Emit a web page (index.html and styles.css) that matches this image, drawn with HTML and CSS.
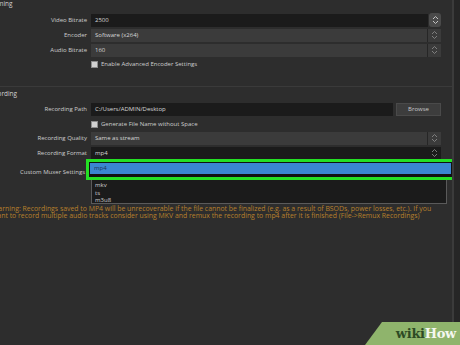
FILE: index.html
```html
<!DOCTYPE html>
<html lang="en">
<head>
    <meta charset="UTF-8">
    <title>Output Settings</title>
    <link rel="stylesheet" href="styles.css">
</head>
<body>
    <div class="panel">
        <section class="group streaming">
            <div class="group-title">Streaming</div>
            <div class="row first">
                <label>Video Bitrate</label>
                <div class="field">
                    <div class="input dark">2500</div>
                    <div class="spin">
                        <svg width="7" height="10" viewBox="0 0 7 10"><path d="M1 4 L3.5 1.5 L6 4 M1 6 L3.5 8.5 L6 6" fill="none" stroke="#c4c4c4" stroke-width="1"/></svg>
                    </div>
                </div>
            </div>
            <div class="row">
                <label>Encoder</label>
                <div class="field combo">
                    <div class="input gray">Software (x264)</div>
                    <div class="arrows">
                        <svg width="7" height="10" viewBox="0 0 7 10"><path d="M1 4 L3.5 1.5 L6 4 M1 6 L3.5 8.5 L6 6" fill="none" stroke="#8f8f8f" stroke-width="0.8"/></svg>
                    </div>
                </div>
            </div>
            <div class="row">
                <label>Audio Bitrate</label>
                <div class="field combo">
                    <div class="input gray">160</div>
                    <div class="arrows">
                        <svg width="7" height="10" viewBox="0 0 7 10"><path d="M1 4 L3.5 1.5 L6 4 M1 6 L3.5 8.5 L6 6" fill="none" stroke="#8f8f8f" stroke-width="0.8"/></svg>
                    </div>
                </div>
            </div>
            <div class="row check-row">
                <span></span>
                <div class="check"><i class="box"></i>Enable Advanced Encoder Settings</div>
            </div>
        </section>

        <section class="group recording">
            <div class="group-title">Recording</div>
            <div class="row">
                <label>Recording Path</label>
                <div class="field">
                    <div class="input dark path">C:/Users/ADMIN/Desktop</div>
                    <button class="browse">Browse</button>
                </div>
            </div>
            <div class="row check-row">
                <span></span>
                <div class="check"><i class="box"></i>Generate File Name without Space</div>
            </div>
            <div class="row">
                <label>Recording Quality</label>
                <div class="field combo">
                    <div class="input gray">Same as stream</div>
                    <div class="arrows">
                        <svg width="7" height="10" viewBox="0 0 7 10"><path d="M1 4 L3.5 1.5 L6 4 M1 6 L3.5 8.5 L6 6" fill="none" stroke="#8f8f8f" stroke-width="0.8"/></svg>
                    </div>
                </div>
            </div>
            <div class="row">
                <label>Recording Format</label>
                <div class="field combo open">
                    <div class="input dark">mp4</div>
                    <div class="arrows">
                        <svg width="7" height="10" viewBox="0 0 7 10"><path d="M1 4 L3.5 1.5 L6 4 M1 6 L3.5 8.5 L6 6" fill="none" stroke="#8f8f8f" stroke-width="0.8"/></svg>
                    </div>
                </div>
            </div>
            <div class="row muxer-row">
                <label>Custom Muxer Settings</label>
                <div class="dropdown">
                    <div class="highlight"><div class="item selected">mp4</div></div>
                    <div class="item">mov</div>
                    <div class="item">mkv</div>
                    <div class="item">ts</div>
                    <div class="item">m3u8</div>
                </div>
            </div>
        </section>

        <p class="warning">Warning: Recordings saved to MP4 will be unrecoverable if the file cannot be finalized (e.g. as a result of BSODs, power losses, etc.). If you<br>want to record multiple audio tracks consider using MKV and remux the recording to mp4 after it is finished (File-&gt;Remux Recordings)</p>
    </div>

    <div class="wikihow"><span class="wiki">wiki</span><span class="how">How</span></div>
</body>
</html>
```

FILE: styles.css
```css
body {
    margin: 0;
    width: 460px;
    height: 345px;
    overflow: hidden;
    background-color: #262626;
    font-family: "Open Sans", "Noto Sans", sans-serif;
    font-size: 6px;
    color: #cfcfcf;
    position: relative;
}

.panel {
    width: 452px;
    height: 345px;
    background-color: #2d2d2d;
    border-right: 2px solid #3b3b3b;
    overflow: hidden;
}

.group-title {
    height: 8px;
    line-height: 7px;
    color: #d4d4d4;
    font-size: 6.4px;
}

.streaming {
    height: 86px;
    border-bottom: 1px solid #3a3a3a;
}

.streaming .group-title {
    margin-left: -18px;
}

.recording {
    padding-top: 3px;
}

.recording .group-title {
    margin-left: -13px;
    margin-bottom: 4px;
}

.row {
    display: grid;
    grid-template-columns: 87px 1fr;
    column-gap: 4px;
    align-items: center;
    height: 14px;
    margin-bottom: 1px;
    padding-right: 11px;
}

.row.first {
    margin-top: 5px;
}

label {
    text-align: right;
    white-space: nowrap;
    color: #cdcdcd;
}

.field {
    display: flex;
    align-items: center;
    height: 13px;
}

.input {
    flex: 1;
    height: 100%;
    line-height: 13px;
    padding-left: 4px;
    box-sizing: border-box;
    color: #d8d8d8;
}

.dark {
    background-color: #1b1b1b;
}

.gray {
    background-color: #3b3b3b;
}

.spin {
    width: 12px;
    height: 14px;
    margin-left: 1px;
    border-radius: 3px;
    background-color: #4a4a4a;
    display: flex;
    align-items: center;
    justify-content: center;
}

.combo .arrows {
    width: 13px;
    height: 100%;
    background-color: #3b3b3b;
    border-left: 1px solid #262626;
    display: flex;
    align-items: center;
    justify-content: center;
}

.combo.open .arrows {
    background-color: #1b1b1b;
    border-left-color: #1b1b1b;
}

.check-row {
    height: 12px;
    margin-top: 1px;
}

.check {
    display: flex;
    align-items: center;
    gap: 3px;
    color: #cdcdcd;
}

.box {
    width: 5px;
    height: 5px;
    background-color: #d0d0d0;
    border: 1px solid #8a8a8a;
}

.path {
    margin-right: 3px;
}

.browse {
    width: 45px;
    height: 13px;
    padding: 0;
    border: 1px solid #4a4a4a;
    background-color: #3d3d3d;
    color: #c8c8c8;
    font-family: inherit;
    font-size: 6px;
}

.recording .check-row {
    margin-top: 2px;
}

.muxer-row {
    align-items: start;
    height: auto;
}

.muxer-row label {
    padding-top: 7px;
    margin-right: 2px;
}

.dropdown {
    position: relative;
    width: 356px;
    height: 43px;
    background-color: #1b1b1b;
    border: 1px solid #5a5a5a;
    border-top: 0;
    box-sizing: border-box;
    padding-top: 13.5px;
}

.highlight {
    position: absolute;
    left: -6px;
    top: -2px;
    width: 361px;
    height: 13px;
    border: 3px solid #24e024;
    background-color: #111;
    padding: 1px;
}

.item {
    height: 7.5px;
    line-height: 7.5px;
    padding-left: 3px;
    color: #d0d0d0;
}

.item.selected {
    height: 11px;
    line-height: 10px;
    background-color: #3a86d0;
    color: #1e3450;
    padding-left: 4px;
}

.warning {
    margin: 1px 0 0 -8px;
    width: 480px;
    white-space: nowrap;
    color: #b8802c;
    font-size: 6.9px;
    line-height: 7.2px;
}

.wikihow {
    position: absolute;
    left: 365px;
    bottom: 0;
    width: 95px;
    height: 23px;
    background-color: #8fb46c;
    clip-path: polygon(17px 0, 95px 0, 95px 23px, 0 23px);
    display: flex;
    align-items: center;
    justify-content: flex-end;
    padding-right: 4px;
    box-sizing: border-box;
    font-family: "DejaVu Serif", "Liberation Serif", serif;
    font-weight: bold;
    font-size: 13px;
    letter-spacing: -0.3px;
}

.wiki {
    color: #2d4a24;
}

.how {
    color: #f4f7ef;
}
```
